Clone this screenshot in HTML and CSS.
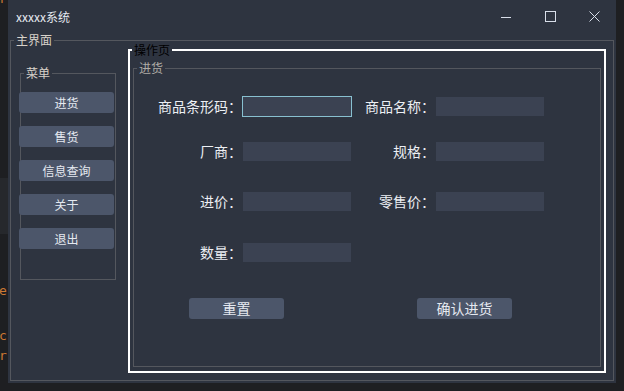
FILE: index.html
```html
<!DOCTYPE html>
<html lang="zh-CN">
<head>
    <meta charset="UTF-8">
    <meta name="viewport" content="width=device-width, initial-scale=1.0">
    <title>xxxxx系统</title>
    <link rel="stylesheet" href="styles.css">
</head>
<body>
    <div class="desktop">
        <div class="ide-strip">
            <span class="code-char top">r</span>
            <span class="strip-shade"></span>
            <span class="code-char ch-e">e</span>
            <span class="code-char ch-c">c</span>
            <span class="code-char ch-r">r</span>
        </div>

        <div class="window">
            <div class="titlebar">
                <span class="win-title">xxxxx系统</span>
                <div class="win-controls">
                    <span class="ctl">
                        <svg width="10" height="10" viewBox="0 0 10 10"><path d="M0 5.5H10" stroke="#d8dee9" stroke-width="1"/></svg>
                    </span>
                    <span class="ctl">
                        <svg width="11" height="11" viewBox="0 0 11 11"><rect x="0.5" y="0.5" width="10" height="10" fill="none" stroke="#d8dee9" stroke-width="1"/></svg>
                    </span>
                    <span class="ctl">
                        <svg width="11" height="11" viewBox="0 0 11 11"><path d="M0.5 0.5L10.5 10.5M10.5 0.5L0.5 10.5" stroke="#d8dee9" stroke-width="1"/></svg>
                    </span>
                </div>
            </div>

            <div class="group main-group">
                <div class="group-title">主界面</div>
                <div class="main-body">
                    <div class="group menu-group">
                        <div class="group-title">菜单</div>
                        <div class="menu-list">
                            <button class="btn menu-btn">进货</button>
                            <button class="btn menu-btn">售货</button>
                            <button class="btn menu-btn">信息查询</button>
                            <button class="btn menu-btn">关于</button>
                            <button class="btn menu-btn">退出</button>
                        </div>
                    </div>

                    <div class="page-frame">
                        <div class="frame-title">操作页</div>
                        <div class="group stock-group">
                            <div class="group-title dim">进货</div>
                            <div class="form-grid">
                                <label class="form-label">商品条形码：</label>
                                <input class="field focused" type="text">
                                <label class="form-label">商品名称：</label>
                                <input class="field" type="text">

                                <label class="form-label">厂商：</label>
                                <input class="field" type="text">
                                <label class="form-label">规格：</label>
                                <input class="field" type="text">

                                <label class="form-label">进价：</label>
                                <input class="field" type="text">
                                <label class="form-label">零售价：</label>
                                <input class="field" type="text">

                                <label class="form-label">数量：</label>
                                <input class="field" type="text">
                            </div>
                            <div class="form-actions">
                                <button class="btn form-btn">重置</button>
                                <button class="btn form-btn">确认进货</button>
                            </div>
                        </div>
                    </div>
                </div>
            </div>
        </div>
    </div>
</body>
</html>
```

FILE: styles.css
```css
body, html {
    margin: 0;
    padding: 0;
    background: #1e1f22;
    font-family: "Noto Sans CJK SC", "Noto Sans", sans-serif;
    overflow: hidden;
}

.desktop {
    display: flex;
    height: 391px;
}

/* bit of the editor peeking out behind the window */
.ide-strip {
    width: 8px;
    height: 391px;
    overflow: hidden;
    display: flex;
    flex-direction: column;
    background: #1e1f22;
}

.code-char {
    font-family: "DejaVu Sans Mono", monospace;
    font-size: 13px;
    line-height: 14px;
    height: 14px;
    color: #cc7832;
    margin-left: -1px;
}

.code-char.top {
    margin-top: -8px;
}

.strip-shade {
    height: 56px;
    margin-top: 172px;
    background: #26282c;
}

.ch-e {
    margin-top: 50px;
}

.ch-c {
    margin-top: 31px;
}

.ch-r {
    margin-top: 6px;
}

.window {
    width: 608px;
    height: 383px;
    background: #2e3440;
    display: flex;
    flex-direction: column;
}

.titlebar {
    height: 33px;
    display: flex;
    align-items: center;
}

.win-title {
    margin-left: 8px;
    font-size: 12px;
    color: #e5e9f0;
}

.win-controls {
    margin-left: auto;
    display: flex;
}

.ctl {
    width: 44px;
    height: 33px;
    display: flex;
    align-items: center;
    justify-content: center;
}

.group {
    border: 1px solid #54575e;
    box-sizing: border-box;
}

.group-title {
    width: fit-content;
    margin: -8px 0 0 3px;
    padding: 0 2px;
    font-size: 12px;
    line-height: 14px;
    color: #d8d2ca;
    background: #2e3440;
}

.group-title.dim {
    color: #b0aca6;
}

.main-group {
    margin: 7px 2px 0 2px;
    height: 341px;
}

.main-body {
    display: flex;
    align-items: flex-start;
}

.menu-group {
    width: 96px;
    height: 207px;
    margin: 26px 0 0 9px;
}

.menu-list {
    display: flex;
    flex-direction: column;
    gap: 13px;
    margin: 12px 0 0 -2px;
}

.btn {
    border: none;
    border-radius: 3px;
    background: #4c566a;
    color: #e5e9f0;
    font-family: inherit;
    padding: 0;
    height: 21px;
    width: 95px;
    cursor: pointer;
}

.menu-btn {
    font-size: 12px;
    line-height: 21px;
}

.page-frame {
    width: 478px;
    height: 324px;
    margin: 2px 0 0 12px;
    border: 2px solid #ffffff;
    box-sizing: border-box;
}

.frame-title {
    width: fit-content;
    margin: -8px 0 0 2px;
    padding: 0 2px;
    font-size: 12px;
    line-height: 14px;
    color: #000000;
    background: #2e3440;
}

.stock-group {
    width: 468px;
    height: 299px;
    margin: 11px 0 0 3px;
}

.form-grid {
    display: grid;
    grid-template-columns: 108px 110px 83px 110px;
    grid-template-rows: 45px 50px 51px 21px;
    align-items: start;
    margin-top: 21px;
}

.form-label {
    justify-self: end;
    font-size: 14px;
    line-height: 21px;
    color: #eceff4;
}

.field {
    width: 110px;
    height: 21px;
    box-sizing: border-box;
    border: 1px solid transparent;
    background: #3b4252;
    background-clip: padding-box;
    padding: 0 3px;
    outline: none;
    color: #eceff4;
    font-family: inherit;
}

.field.focused {
    border-color: #88c0d0;
}

.form-actions {
    display: flex;
    gap: 133px;
    margin-top: 35px;
    padding-left: 55px;
}

.form-btn {
    font-size: 14px;
    line-height: 21px;
}
```
